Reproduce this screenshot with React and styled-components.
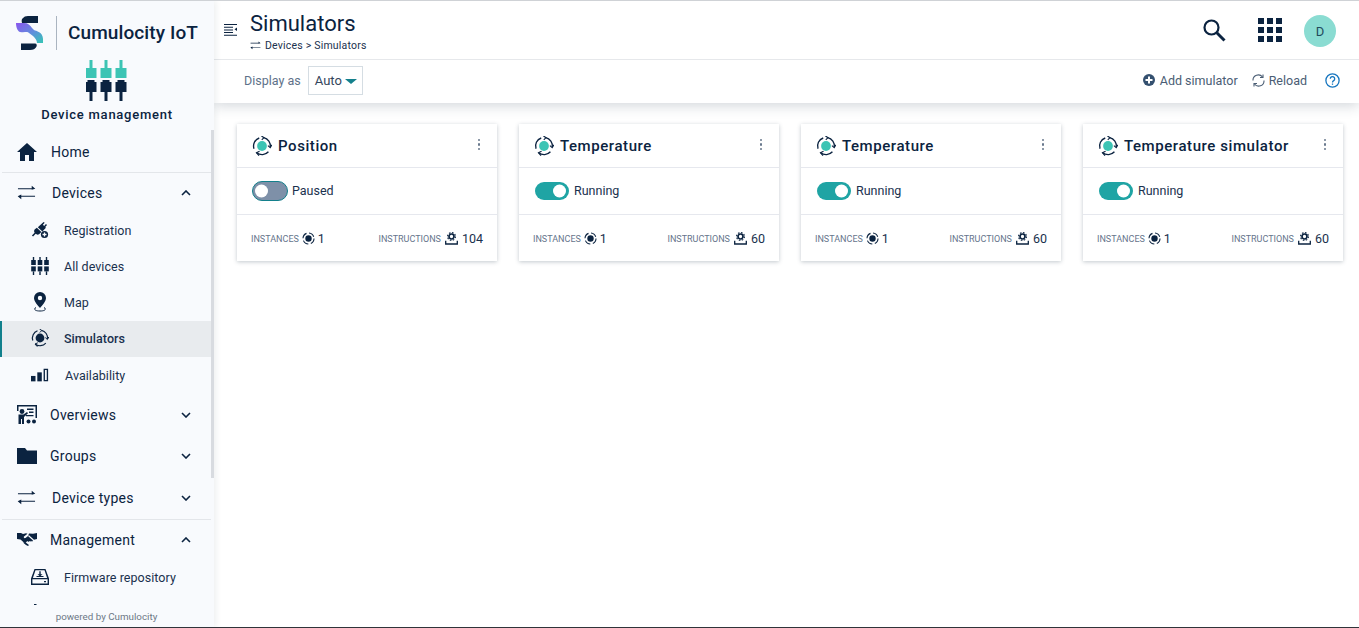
import React from "react";
import styled, { createGlobalStyle } from "styled-components";

const ink = "#0b2340";

const Global = createGlobalStyle`
  html, body { margin: 0; padding: 0; height: 100%; background: #fff; overflow: hidden; }
  body { font-family: Roboto, "Liberation Sans", sans-serif; color: ${ink}; }
  #root { height: 100%; }
  * { box-sizing: border-box; }
`;

/* ---------- icons ---------- */
const SwapIcon = ({ size = 19 }) => (
  <svg width={size} height={size * 0.8} viewBox="0 0 20 16" fill={ink}>
    <path d="M1 3.300h14.500V.8l3.800 3.100-3.800 1V4.500H1z" />
    <path d="M19 11.300H4.500V10l-3.800 1.900 3.800 3.100v-2.500H19z" />
  </svg>
);

const HomeIcon = () => (
  <svg width="20" height="18" viewBox="0 0 20 18" fill={ink}>
    <path d="M10 0 L20 9 H17 V18 H12 V12 H8 V18 H3 V9 H0 Z" />
  </svg>
);

const Chevron = ({ up }) => (
  <svg width="10" height="6" viewBox="0 0 10 6" fill="none" stroke={ink} strokeWidth="1.6">
    <path d={up ? "M1 5 L5 1 L9 5" : "M1 1 L5 5 L9 1"} />
  </svg>
);

const PlugIcon = () => (
  <svg width="20" height="20" viewBox="0 0 20 20" fill={ink}>
    <path d="M14 1l1.200 1-2 2.200 1.400 1.300 2-2.200 1.200 1.100-2 2.200.8.9-4 4.200-5-4.800z" />
    <path d="M6.500 7.500l5 4.800-2.200 2.200c-1.400 1-3 .9-4.100-.2L2.300 17.300 1 16l3-3c-.8-1.200-.7-2.800.3-3.800z" />
    <circle cx="15" cy="15" r="4" fill={ink} />
    <path d="M14.300 12.800h1.400v1.500h1.500v1.400h-1.500v1.500h-1.400v-1.500h-1.500v-1.400h1.500z" fill="#f8fafc" />
  </svg>
);

const DevicesIcon = () => {
  const cols = [2.5, 9, 15.5];
  return (
    <svg width="18" height="18" viewBox="0 0 18 18" fill={ink}>
      {cols.map((x) => (
        <g key={x}>
          <rect x={x - 0.7} y="0" width="1.4" height="3" />
          <rect x={x - 2.3} y="3" width="4.6" height="5" />
          <rect x={x - 2.3} y="9.4" width="4.6" height="5" />
          <rect x={x - 0.7} y="14.4" width="1.4" height="3.6" />
        </g>
      ))}
    </svg>
  );
};

const MapPinIcon = () => (
  <svg width="14" height="20" viewBox="0 0 14 20" fill={ink}>
    <path fillRule="evenodd" d="M7 0a6 6 0 0 1 6 6c0 3.500-4 7.500-6 10-2-2.500-6-6.500-6-10a6 6 0 0 1 6-6zm0 3.800a2.200 2.200 0 1 0 0 4.400 2.200 2.200 0 0 0 0-4.400z" />
    <path d="M3 15.500c-2 .8-2.500 3.500 4 3.500s6-2.700 4-3.500" fill="none" stroke={ink} strokeWidth="1" />
  </svg>
);

const SimIcon = ({ dot = ink, size = 18 }) => (
  <svg width={size} height={size} viewBox="0 0 18 18" fill="none" stroke={ink} strokeWidth="1.200">
    <circle cx="9" cy="9" r="4.400" fill={dot} stroke="none" />
    <path d="M1.800 11.500A7.700 7.700 0 0 1 6.500 1.800" />
    <path d="M10.500 1.400A7.700 7.700 0 0 1 16.500 10" />
    <path d="M14.800 14.200A7.700 7.700 0 0 1 4.200 15" />
    <path d="M8.500 0L10.800 1.500 8.800 3.500M17.800 8 16.400 10.500 14.300 8.600M6.300 17.700 4 15 6.800 13.800" strokeWidth="1" />
  </svg>
);

const BarsIcon = () => (
  <svg width="20" height="15" viewBox="0 0 20 15" fill={ink}>
    <rect x="0" y="8" width="5" height="6" />
    <rect x="7" y="4" width="5" height="10" />
    <path fillRule="evenodd" d="M14 0h5v14h-5zM15.500 1.500v11h2v-11z" />
  </svg>
);

const OverviewIcon = () => (
  <svg width="20" height="19" viewBox="0 0 20 19" fill={ink}>
    <path fillRule="evenodd" d="M0 0h20v13h-1.500V1.500h-17V6H0z" />
    <circle cx="5" cy="6.500" r="2.400" />
    <path d="M1.500 9.500h5L10 7l1 1.200-4 3.800V19H5v-5H4v5H1.500z" />
    <path d="M10 3.500h6.500v1.500H10zM12 6.500h4.500V8H12zM9 10h7.500v1.300H9z" />
    <circle cx="11.500" cy="16.500" r="2" />
    <circle cx="17" cy="16.500" r="2" />
  </svg>
);

const FolderIcon = () => (
  <svg width="20" height="16" viewBox="0 0 20 16" fill={ink}>
    <path d="M0 0h8l2 2.500h10V16H0z" />
  </svg>
);

const HandshakeIcon = () => (
  <svg width="20" height="13" viewBox="0 0 20 13" fill={ink}>
    <path d="M0 0h4l2 1 3-.8 1.500.5L7 3.500c-.8 1 .4 2 1.500 1.500l2.500-2 5 4.500-1 1.200-1-.9-.8.9-1-.8-.8 1-1.200-.9L9 9.500 8 10.500 3.500 6.500 0 6z" />
    <path d="M12 .5l4 .3 4-.8v6l-3 .8-5-4.500-1 .8z" />
    <path d="M6 9.500l1.500 1.200L9 12l2 1 1-1-3-2.200z" />
  </svg>
);

const FirmwareIcon = () => (
  <svg width="18" height="16" viewBox="0 0 18 16" fill={ink}>
    <path fillRule="evenodd" d="M3.500 0h11L18 9.500V16H0V9.500zM4.500 1.300 1.900 9h14.200l-2.600-7.700zM1.400 10.300v4.300h15.200v-4.300z" />
    <path d="M8.300 2.200h1.400v3h1.800L9 7.600 6.500 5.200h1.800zM5.500 7h7v1h-7z" />
    <path d="M13 12h2v1.300h-2z" />
  </svg>
);

const NextItemIcon = () => (
  <svg width="18" height="18" viewBox="0 0 18 18" fill={ink}>
    <rect x="3" y="0" width="2.500" height="1.400" />
    <rect x="1" y="3" width="16" height="14" />
  </svg>
);

const SearchIcon = () => (
  <svg width="24" height="24" viewBox="0 0 24 24" fill="none" stroke={ink}>
    <circle cx="9.500" cy="9.500" r="7" strokeWidth="2.200" />
    <path d="M14.800 14.800 L22.500 22.500" strokeWidth="3" />
  </svg>
);

const AppsIcon = () => (
  <svg width="24" height="24" viewBox="0 0 24 24" fill={ink}>
    {[0, 9, 18].map((y) =>
      [0, 9, 18].map((x) => <rect key={`${x}-${y}`} x={x} y={y} width="6" height="6" />)
    )}
  </svg>
);

const MenuIcon = () => (
  <svg width="13" height="12" viewBox="0 0 13 12" fill={ink}>
    <path d="M0 0h13v1H0zM0 2.700h9v1H0zM0 5.400h9v1H0zM0 8.100h9v1H0zM0 10.800h13v1H0z" />
    <path d="M13 3.500v3.500L10.500 5.300z" />
  </svg>
);

const PlusCircle = () => (
  <svg width="12" height="12" viewBox="0 0 12 12">
    <circle cx="6" cy="6" r="6" fill="#34506f" />
    <path d="M5 2.500h2V5h2.500v2H7v2.500H5V7H2.500V5H5z" fill="#fff" />
  </svg>
);

const ReloadIcon = () => (
  <svg width="13" height="13" viewBox="0 0 13 13" fill="none" stroke="#4a5d74" strokeWidth="1.100">
    <path d="M1 6.500A5.300 5.300 0 0 1 10.500 3" />
    <path d="M12 6.500A5.300 5.300 0 0 1 2.500 10" />
    <path d="M11 .5V3.500H8M2 12.500V9.500h3" />
  </svg>
);

const HelpIcon = () => (
  <svg width="15" height="15" viewBox="0 0 15 15" fill="none" stroke="#1776bf" strokeWidth="1.300">
    <circle cx="7.500" cy="7.500" r="6.600" />
    <path d="M5.300 5.800a2.200 2.200 0 1 1 3.400 1.800c-.8.500-1.200 1-1.200 1.900" />
    <path d="M7.500 10.500v1.300" />
  </svg>
);

const InstanceIcon = () => (
  <svg width="13" height="13" viewBox="0 0 13 13" fill="none" stroke={ink} strokeWidth="1.100">
    <circle cx="6.500" cy="6.500" r="3.200" fill={ink} stroke="none" />
    <circle cx="6.500" cy="6.500" r="5.500" strokeDasharray="6 2.600" />
  </svg>
);

const InstructionIcon = () => (
  <svg width="13" height="13" viewBox="0 0 13 13" fill="none" stroke={ink}>
    <circle cx="6.500" cy="4.500" r="2.500" strokeWidth="1.700" />
    <circle cx="6.500" cy="4.500" r="3.900" strokeWidth="1.200" strokeDasharray="1.600 1.460" />
    <path d="M.7 8.700v3.300h11.600V8.700" strokeWidth="1.300" />
  </svg>
);

const Logo = () => (
  <svg width="28" height="34" viewBox="0 0 28 34">
    <defs>
      <linearGradient id="logoGrad" x1="0" y1="0" x2="1" y2="1">
        <stop offset="0" stopColor="#8a55ee" />
        <stop offset="0.55" stopColor="#5f8fdc" />
        <stop offset="1" stopColor="#35c6b5" />
      </linearGradient>
    </defs>
    <path d="M12 0H22V7H6C5.500 5 5.500 3.500 6.500 2.500 8 .8 9.500 0 12 0z" fill={ink} />
    <path d="M0 7H8C12 7 14 9 16 12L18 14C20 15 27 16 27 23V27H21C21 24 19 22 17 20L13 17C11 15 9 17 4 16 1 15 0 10 0 7z" fill="url(#logoGrad)" />
    <path d="M5 27.500H19C21 27.500 21 29.500 20.500 30.500 19.500 33 17 34 14 34H5z" fill={ink} />
  </svg>
);

const AppMark = () => (
  <svg width="42" height="41" viewBox="0 0 42 41" fill={ink}>
    {[5, 20, 35].map((x) => (
      <g key={x}>
        <rect x={x - 1.5} y="0" width="3" height="8" fill="#3cc4b4" />
        <rect x={x - 5.5} y="8" width="11" height="10" fill="#3cc4b4" />
        <rect x={x - 3.5} y="20" width="7" height="3" />
        <rect x={x - 5.5} y="22" width="11" height="10" />
        <rect x={x - 1.5} y="32" width="3" height="9" />
      </g>
    ))}
  </svg>
);

/* ---------- layout ---------- */
const Page = styled.div`
  display: flex;
  height: 628px;
  border-top: 1px solid #cfd2d6;
  border-bottom: 1px solid #30343a;
  overflow: hidden;
`;

const Sidebar = styled.aside`
  position: relative;
  width: 214px;
  flex: none;
  display: flex;
  flex-direction: column;
  background: #f8fafd;
  box-shadow: 2px 0 6px rgba(30, 50, 70, 0.08);
  z-index: 2;
`;

const Brand = styled.div`
  display: flex;
  align-items: center;
  height: 34px;
  margin-top: 15px;
  padding-left: 16px;
`;

const BrandDivider = styled.span`
  width: 1px;
  height: 34px;
  margin: 0 11px 0 12px;
  background: #aab4c0;
`;

const BrandName = styled.span`
  margin-top: -2px;
  font-size: 19px;
  font-weight: 500;
  letter-spacing: 0.1px;
`;

const AppBlock = styled.div`
  display: flex;
  flex-direction: column;
  align-items: center;
  margin-top: 10px;
  gap: 6px;
`;

const AppName = styled.div`
  font-size: 13px;
  font-weight: 500;
  letter-spacing: 0.75px;
`;

const Nav = styled.nav`
  flex: 1;
  overflow: hidden;
  margin-top: 10px;
  margin-right: 3px;
`;

const Divider = styled.div`
  height: 1px;
  margin: 0 0 0 2px;
  background: #e3e6ea;
`;

const TopItem = styled.div`
  display: flex;
  align-items: center;
  height: ${(p) => p.$h || 41}px;
  padding-left: 17px;
  padding-right: 20px;
  font-size: 14px;
  letter-spacing: 0.25px;
`;

const TopIcon = styled.span`
  display: flex;
  justify-content: flex-start;
  width: ${(p) => p.$w || 33}px;
  flex: none;
`;

const TopLabel = styled.span`
  flex: 1;
`;

const SubItem = styled.div`
  display: flex;
  align-items: center;
  height: ${(p) => p.$h || 36}px;
  padding-left: ${(p) => (p.$active ? 29 : 31)}px;
  padding-bottom: ${(p) => p.$pb || 0}px;
  font-size: 12.5px;
  letter-spacing: 0.05px;
  color: #1a314e;
  background: ${(p) => (p.$active ? "#e8ebee" : "transparent")};
  border-left: ${(p) => (p.$active ? "2px solid #11808c" : "none")};
  font-weight: ${(p) => (p.$active ? 500 : 400)};
`;

const SubIcon = styled.span`
  display: flex;
  justify-content: center;
  width: 18px;
  margin-right: ${(p) => p.$gap || 15}px;
  flex: none;
`;

const Scrollbar = styled.div`
  position: absolute;
  top: 129px;
  right: 0;
  width: 3px;
  height: 348px;
  background: #d8dbe0;
`;

const Powered = styled.div`
  position: absolute;
  left: 0;
  right: 3px;
  bottom: 0;
  height: 22px;
  padding: 6px 0 0 2px;
  text-align: center;
  font-size: 9.8px;
  color: #6d7886;
  background: #f8fafd;
`;

const Main = styled.main`
  flex: 1;
  min-width: 0;
  display: flex;
  flex-direction: column;
`;

const TopPanel = styled.div`
  box-shadow: 0 3px 12px rgba(40, 60, 80, 0.2);
  background: #fff;
  z-index: 1;
`;

const Header = styled.header`
  display: flex;
  align-items: center;
  height: 59px;
  padding-left: 10px;
  padding-right: 23px;
  border-bottom: 1px solid #e6e8eb;
`;

const MenuButton = styled.span`
  display: flex;
  width: 26px;
`;

const TitleBlock = styled.div`
  flex: 1;
  margin-top: 3px;
`;

const Title = styled.h1`
  margin: 0;
  font-size: 22px;
  line-height: 26px;
  font-weight: 400;
`;

const Crumb = styled.div`
  display: flex;
  align-items: center;
  gap: 4px;
  margin-top: 2px;
  font-size: 10.5px;
  letter-spacing: 0.2px;
  color: #1a314e;
`;

const HeaderIcons = styled.div`
  display: flex;
  align-items: center;
`;

const Avatar = styled.div`
  width: 32px;
  height: 32px;
  margin-left: 22px;
  margin-top: 2px;
  border-radius: 50%;
  background: #8adcd2;
  display: flex;
  align-items: center;
  justify-content: center;
  font-size: 13px;
  color: #1f4a5c;
`;

const AppsSlot = styled.span`
  display: flex;
  margin-left: 32px;
`;

const Toolbar = styled.div`
  display: flex;
  align-items: center;
  height: 43px;
  padding: 0 19px 3px 30px;
  font-size: 12.5px;
  color: #5e7189;
`;

const SelectBox = styled.div`
  display: flex;
  align-items: center;
  gap: 3px;
  height: 29px;
  width: 55px;
  margin-left: 7px;
  padding-left: 6px;
  border: 1px solid #d5dde3;
  font-size: 13px;
  color: #34465c;
`;

const Caret = styled.span`
  width: 0;
  height: 0;
  margin-top: 2px;
  border-left: 6.5px solid transparent;
  border-right: 6.5px solid transparent;
  border-top: 5px solid #14808c;
`;

const ToolSpacer = styled.div`
  flex: 1;
`;

const ToolAction = styled.span`
  display: flex;
  align-items: center;
  gap: ${(p) => p.$inner || 4}px;
  margin-left: ${(p) => p.$gap || 14}px;
  color: #4a5d74;
`;

const CardGrid = styled.div`
  display: grid;
  grid-template-columns: repeat(4, 260px);
  gap: 22px;
  padding: 21px 0 0 23px;
`;

const Card = styled.section`
  background: #fff;
  box-shadow: 0 1px 4px rgba(40, 60, 80, 0.28);
`;

const CardHead = styled.div`
  display: flex;
  align-items: center;
  gap: 6px;
  height: 44px;
  padding: 0 17px 0 15px;
  border-bottom: 1px solid #e6e8ee;
`;

const CardTitle = styled.h2`
  flex: 1;
  margin: 0;
  font-size: 15px;
  font-weight: 500;
  letter-spacing: 0.57px;
`;

const Kebab = styled.span`
  display: flex;
  flex-direction: column;
  gap: 2px;
  margin-top: -2px;
  & > i {
    width: 2.5px;
    height: 2.5px;
    border-radius: 50%;
    background: #68788c;
  }
`;

const CardBody = styled.div`
  display: flex;
  align-items: center;
  gap: 4px;
  height: 47px;
  padding-left: 15px;
  border-bottom: 1px solid #e6e8ee;
  font-size: 12.5px;
  color: #1a314e;
`;

const Toggle = styled.span`
  position: relative;
  width: ${(p) => (p.$on ? 34 : 36)}px;
  height: ${(p) => (p.$on ? 18 : 20)}px;
  margin: ${(p) => (p.$on ? "0 1px" : "0")};
  border-radius: 10px;
  background: ${(p) => (p.$on ? "#1fa4a4" : "#7e90a8")};
  border: ${(p) => (p.$on ? "none" : "1px solid #14808c")};
  &::after {
    content: "";
    position: absolute;
    top: 50%;
    transform: translateY(-50%);
    ${(p) => (p.$on ? "right: 3px;" : "left: 2px;")}
    width: 13px;
    height: 13px;
    border-radius: 50%;
    background: #fff;
  }
`;

const StatusLabel = styled.span`
  margin-top: -2px;
`;

const CardFoot = styled.div`
  display: flex;
  align-items: center;
  justify-content: space-between;
  height: 46px;
  padding: 1px 14px 0 14px;
`;

const Stat = styled.span`
  display: flex;
  align-items: center;
  gap: ${(p) => p.$gap || 4}px;
  font-size: 12.5px;
  color: #1a314e;
`;

const StatLabel = styled.span`
  font-size: 9px;
  color: #66758c;
`;

const simulators = [
  { name: "Position", running: false, instructions: 104 },
  { name: "Temperature", running: true, instructions: 60 },
  { name: "Temperature", running: true, instructions: 60 },
  { name: "Temperature simulator", running: true, instructions: 60 },
];

function App() {
  return (
    <>
      <Global />
      <Page>
        <Sidebar>
          <Brand>
            <Logo />
            <BrandDivider />
            <BrandName>Cumulocity IoT</BrandName>
          </Brand>
          <AppBlock>
            <AppMark />
            <AppName>Device management</AppName>
          </AppBlock>
          <Nav>
            <TopItem $h={40}>
              <TopIcon $w={34}><HomeIcon /></TopIcon>
              <TopLabel>Home</TopLabel>
            </TopItem>
            <Divider />
            <TopItem $h={39}>
              <TopIcon $w={35}><SwapIcon /></TopIcon>
              <TopLabel>Devices</TopLabel>
              <Chevron up />
            </TopItem>
            <SubItem><SubIcon><PlugIcon /></SubIcon>Registration</SubItem>
            <SubItem><SubIcon><DevicesIcon /></SubIcon>All devices</SubItem>
            <SubItem $h={37} $pb={1}><SubIcon><MapPinIcon /></SubIcon>Map</SubItem>
            <SubItem $active $pb={2}><SubIcon><SimIcon /></SubIcon>Simulators</SubItem>
            <SubItem $h={37}><SubIcon $gap={16}><BarsIcon /></SubIcon>Availability</SubItem>
            <TopItem $h={41}>
              <TopIcon><OverviewIcon /></TopIcon>
              <TopLabel>Overviews</TopLabel>
              <Chevron />
            </TopItem>
            <TopItem $h={42}>
              <TopIcon><FolderIcon /></TopIcon>
              <TopLabel>Groups</TopLabel>
              <Chevron />
            </TopItem>
            <TopItem $h={42}>
              <TopIcon $w={35}><SwapIcon /></TopIcon>
              <TopLabel>Device types</TopLabel>
              <Chevron />
            </TopItem>
            <Divider />
            <TopItem $h={39}>
              <TopIcon><HandshakeIcon /></TopIcon>
              <TopLabel>Management</TopLabel>
              <Chevron up />
            </TopItem>
            <SubItem><SubIcon><FirmwareIcon /></SubIcon>Firmware repository</SubItem>
            <SubItem><SubIcon><NextItemIcon /></SubIcon></SubItem>
          </Nav>
          <Scrollbar />
          <Powered>powered by Cumulocity</Powered>
        </Sidebar>
        <Main>
          <TopPanel>
            <Header>
              <MenuButton><MenuIcon /></MenuButton>
              <TitleBlock>
                <Title>Simulators</Title>
                <Crumb><SwapIcon size={11} />Devices &gt; Simulators</Crumb>
              </TitleBlock>
              <HeaderIcons>
                <SearchIcon />
                <AppsSlot><AppsIcon /></AppsSlot>
                <Avatar>D</Avatar>
              </HeaderIcons>
            </Header>
            <Toolbar>
              Display as
              <SelectBox>Auto<Caret /></SelectBox>
              <ToolSpacer />
              <ToolAction $inner={5}><PlusCircle />Add simulator</ToolAction>
              <ToolAction><ReloadIcon />Reload</ToolAction>
              <ToolAction $gap={18}><HelpIcon /></ToolAction>
            </Toolbar>
          </TopPanel>
          <CardGrid>
            {simulators.map((s, i) => (
              <Card key={i}>
                <CardHead>
                  <SimIcon dot="#3cc4b4" size={20} />
                  <CardTitle>{s.name}</CardTitle>
                  <Kebab><i /><i /><i /></Kebab>
                </CardHead>
                <CardBody>
                  <Toggle $on={s.running} />
                  <StatusLabel>{s.running ? "Running" : "Paused"}</StatusLabel>
                </CardBody>
                <CardFoot>
                  <Stat $gap={3}><StatLabel>INSTANCES</StatLabel><InstanceIcon />1</Stat>
                  <Stat><StatLabel>INSTRUCTIONS</StatLabel><InstructionIcon />{s.instructions}</Stat>
                </CardFoot>
              </Card>
            ))}
          </CardGrid>
        </Main>
      </Page>
    </>
  );
}

export default App;
